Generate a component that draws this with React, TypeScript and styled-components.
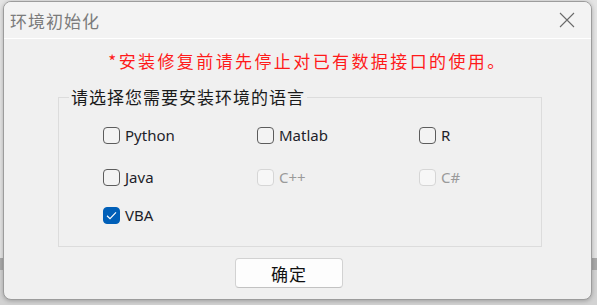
import React, { useState } from 'react';
import styled, { createGlobalStyle } from 'styled-components';

const GlobalStyle = createGlobalStyle`
  html, body {
    margin: 0;
    padding: 0;
  }
  body {
    width: 597px;
    height: 305px;
    overflow: hidden;
    background: linear-gradient(#e4e4e4 0, #e4e4e4 258px, #a9a9a9 258px, #a9a9a9 270px, #d2d2d2 270px);
    font-family: "Noto Sans CJK SC", "Noto Sans", sans-serif;
  }
`;

const Page = styled.div`
  padding: 1px 5px 5px 3px;
`;

const Window = styled.div`
  width: 589px;
  height: 299px;
  box-sizing: border-box;
  border: 1px solid #9c9c9c;
  border-radius: 8px;
  background: #f0f0f0;
  box-shadow: 0 1px 4px rgba(0, 0, 0, 0.25);
  overflow: hidden;
  display: flex;
  flex-direction: column;
`;

const TitleBar = styled.div`
  height: 36px;
  flex: none;
  display: flex;
  align-items: center;
  justify-content: space-between;
  padding: 0 15px 0 6px;
  background: #f3f3f3;
  border-bottom: 1px solid #ffffff;
`;

const Title = styled.span`
  font-size: 17px;
  color: #7b7b7b;
  letter-spacing: 1px;
`;

const CloseButton = styled.button`
  width: 18px;
  height: 18px;
  padding: 0;
  border: 0;
  background: transparent;
  display: flex;
  align-items: center;
  justify-content: center;
  cursor: pointer;
`;

const Body = styled.div`
  flex: 1;
  display: flex;
  flex-direction: column;
  align-items: center;
`;

const Notice = styled.div`
  margin: 11px 0 0 20px;
  height: 22px;
  line-height: 22px;
  font-size: 17px;
  letter-spacing: 2.4px;
  color: #ff1a1a;
`;

const Group = styled.fieldset`
  align-self: flex-start;
  margin: 15px 0 0 54px;
  width: 484px;
  box-sizing: border-box;
  padding: 7px 0 14px 0;
  border: 1px solid #dcdcdc;
  min-width: 0;
`;

const Legend = styled.legend`
  margin-left: 10px;
  padding: 0 2px;
  font-size: 17px;
  line-height: 20px;
  letter-spacing: 1px;
  color: #1a1a1a;
`;

const OptionGrid = styled.div`
  display: grid;
  grid-template-columns: 154px 162px auto;
  grid-template-rows: 42px 42px 34px;
  padding-left: 44px;
`;

const Option = styled.label<{ disabled?: boolean }>`
  display: flex;
  align-items: center;
  gap: 5px;
  font-family: "Noto Sans", "Open Sans", sans-serif;
  font-size: 15px;
  color: ${p => (p.disabled ? '#9a9a9a' : '#1e1e2a')};
  cursor: ${p => (p.disabled ? 'default' : 'pointer')};
  user-select: none;
`;

const Box = styled.span<{ checked: boolean; disabled?: boolean }>`
  width: 17px;
  height: 17px;
  box-sizing: border-box;
  border-radius: 4px;
  display: flex;
  align-items: center;
  justify-content: center;
  border: 1px solid ${p => (p.checked ? '#005fb8' : p.disabled ? '#d6d6d6' : '#5c5c5c')};
  background: ${p => (p.checked ? '#005fb8' : p.disabled ? '#f7f7f7' : '#f3f3f3')};
`;

const Footer = styled.div`
  margin-top: 11px;
  align-self: stretch;
  display: flex;
  justify-content: center;
  padding-right: 17px;
`;

const OkButton = styled.button`
  width: 108px;
  height: 30px;
  border: 1px solid #d2d2d2;
  border-bottom-color: #c2c2c2;
  border-radius: 4px;
  background: #fdfdfd;
  font-family: "Noto Sans CJK SC", sans-serif;
  font-size: 17px;
  color: #111;
  letter-spacing: 1px;
  padding: 0;
  cursor: pointer;
`;

type Lang = { name: string; disabled?: boolean };

const languages: Lang[] = [
  { name: 'Python' },
  { name: 'Matlab' },
  { name: 'R' },
  { name: 'Java' },
  { name: 'C++', disabled: true },
  { name: 'C#', disabled: true },
  { name: 'VBA' },
];

export default function App() {
  const [selected, setSelected] = useState<Record<string, boolean>>({ VBA: true });

  function toggle(lang: Lang) {
    if (lang.disabled) return;
    setSelected(prev => ({ ...prev, [lang.name]: !prev[lang.name] }));
  }

  return (
    <Page>
      <GlobalStyle />
      <Window>
        <TitleBar>
          <Title>环境初始化</Title>
          <CloseButton aria-label="close">
            <svg width="16" height="16" viewBox="0 0 16 16">
              <path d="M1 1 L15 15 M15 1 L1 15" stroke="#6a6a6a" strokeWidth="1.1" fill="none" />
            </svg>
          </CloseButton>
        </TitleBar>
        <Body>
          <Notice>*安装修复前请先停止对已有数据接口的使用。</Notice>
          <Group>
            <Legend>请选择您需要安装环境的语言</Legend>
            <OptionGrid>
              {languages.map(lang => {
                const checked = !!selected[lang.name];
                return (
                  <Option key={lang.name} disabled={lang.disabled} onClick={() => toggle(lang)}>
                    <Box checked={checked} disabled={lang.disabled}>
                      {checked && (
                        <svg width="11" height="9" viewBox="0 0 11 9">
                          <path d="M1 4.8 L4 7.6 L10 1.4" stroke="#ffffff" strokeWidth="1.2" fill="none" />
                        </svg>
                      )}
                    </Box>
                    {lang.name}
                  </Option>
                );
              })}
            </OptionGrid>
          </Group>
          <Footer>
            <OkButton>确定</OkButton>
          </Footer>
        </Body>
      </Window>
    </Page>
  );
}
